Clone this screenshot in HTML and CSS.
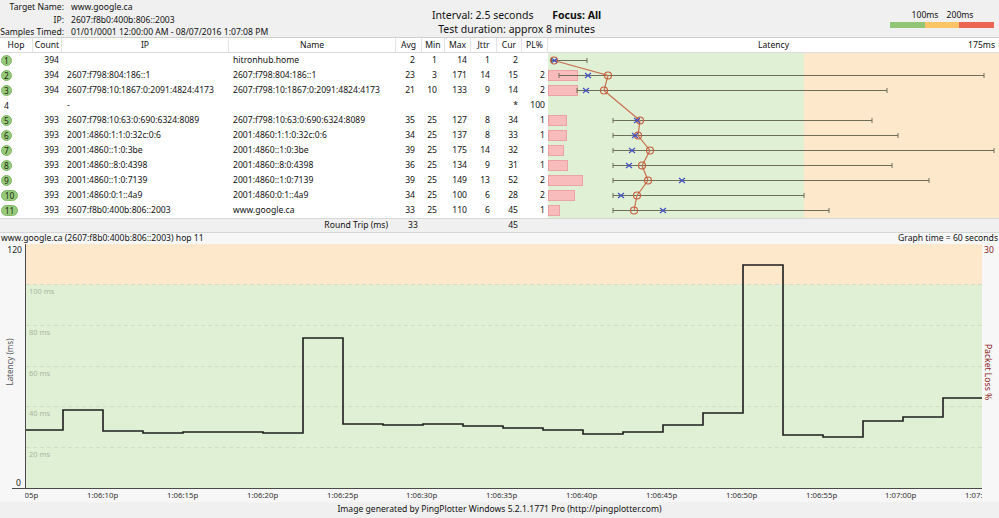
FILE: index.html
```html
<!DOCTYPE html>
<html>
<head>
<meta charset="utf-8">
<link rel="stylesheet" href="styles.css">
</head>
<body>
<header class="top">
  <div class="target">
    <span class="lbl">Target Name:</span><span>www.google.ca</span>
    <span class="lbl">IP:</span><span>2607:f8b0:400b:806::2003</span>
    <span class="lbl">Samples Timed:</span><span>01/01/0001 12:00:00 AM - 08/07/2016 1:07:08 PM</span>
  </div>
  <div class="info">
    <div>Interval: 2.5 seconds <b class="focus">Focus: All</b></div>
    <div>Test duration: approx 8 minutes</div>
  </div>
  <div class="legend">
    <div class="legend-labels"><span></span><span>100ms</span><span>200ms</span><span></span></div>
    <div class="legend-bar"><span class="lg-g"></span><span class="lg-o"></span><span class="lg-r"></span></div>
  </div>
</header>

<section class="trace">
  <div class="row head">
    <div class="c">Hop</div><div class="c">Count</div><div class="c">IP</div><div class="c">Name</div>
    <div class="c">Avg</div><div class="c">Min</div><div class="c">Max</div><div class="c">Jttr</div>
    <div class="c">Cur</div><div class="c">PL%</div>
    <div class="c lat-head"><span></span><span>Latency</span><span class="lat-max">175ms</span></div>
  </div>

  <div class="row"><div class="c hop"><span class="dot">1</span></div><div class="c num cnt">394</div><div class="c ip"></div><div class="c nm">hitronhub.home</div><div class="c num avg">2</div><div class="c num min">1</div><div class="c num max">14</div><div class="c num jt">1</div><div class="c num cur">2</div><div class="c num pl"></div><div class="c lat"></div></div>
  <div class="row"><div class="c hop"><span class="dot">2</span></div><div class="c num cnt">394</div><div class="c ip">2607:f798:804:186::1</div><div class="c nm">2607:f798:804:186::1</div><div class="c num avg">23</div><div class="c num min">3</div><div class="c num max">171</div><div class="c num jt">14</div><div class="c num cur">15</div><div class="c num pl">2</div><div class="c lat"></div></div>
  <div class="row"><div class="c hop"><span class="dot">3</span></div><div class="c num cnt">394</div><div class="c ip">2607:f798:10:1867:0:2091:4824:4173</div><div class="c nm">2607:f798:10:1867:0:2091:4824:4173</div><div class="c num avg">21</div><div class="c num min">10</div><div class="c num max">133</div><div class="c num jt">9</div><div class="c num cur">14</div><div class="c num pl">2</div><div class="c lat"></div></div>
  <div class="row"><div class="c hop"><span class="nodot">4</span></div><div class="c num cnt"></div><div class="c ip">-</div><div class="c nm"></div><div class="c num avg"></div><div class="c num min"></div><div class="c num max"></div><div class="c num jt"></div><div class="c num cur">*</div><div class="c num pl">100</div><div class="c lat"></div></div>
  <div class="row"><div class="c hop"><span class="dot">5</span></div><div class="c num cnt">393</div><div class="c ip">2607:f798:10:63:0:690:6324:8089</div><div class="c nm">2607:f798:10:63:0:690:6324:8089</div><div class="c num avg">35</div><div class="c num min">25</div><div class="c num max">127</div><div class="c num jt">8</div><div class="c num cur">34</div><div class="c num pl">1</div><div class="c lat"></div></div>
  <div class="row"><div class="c hop"><span class="dot">6</span></div><div class="c num cnt">393</div><div class="c ip">2001:4860:1:1:0:32c:0:6</div><div class="c nm">2001:4860:1:1:0:32c:0:6</div><div class="c num avg">34</div><div class="c num min">25</div><div class="c num max">137</div><div class="c num jt">8</div><div class="c num cur">33</div><div class="c num pl">1</div><div class="c lat"></div></div>
  <div class="row"><div class="c hop"><span class="dot">7</span></div><div class="c num cnt">393</div><div class="c ip">2001:4860::1:0:3be</div><div class="c nm">2001:4860::1:0:3be</div><div class="c num avg">39</div><div class="c num min">25</div><div class="c num max">175</div><div class="c num jt">14</div><div class="c num cur">32</div><div class="c num pl">1</div><div class="c lat"></div></div>
  <div class="row"><div class="c hop"><span class="dot">8</span></div><div class="c num cnt">393</div><div class="c ip">2001:4860::8:0:4398</div><div class="c nm">2001:4860::8:0:4398</div><div class="c num avg">36</div><div class="c num min">25</div><div class="c num max">134</div><div class="c num jt">9</div><div class="c num cur">31</div><div class="c num pl">1</div><div class="c lat"></div></div>
  <div class="row"><div class="c hop"><span class="dot">9</span></div><div class="c num cnt">393</div><div class="c ip">2001:4860::1:0:7139</div><div class="c nm">2001:4860::1:0:7139</div><div class="c num avg">39</div><div class="c num min">25</div><div class="c num max">149</div><div class="c num jt">13</div><div class="c num cur">52</div><div class="c num pl">2</div><div class="c lat"></div></div>
  <div class="row"><div class="c hop"><span class="dot wide">10</span></div><div class="c num cnt">393</div><div class="c ip">2001:4860:0:1::4a9</div><div class="c nm">2001:4860:0:1::4a9</div><div class="c num avg">34</div><div class="c num min">25</div><div class="c num max">100</div><div class="c num jt">6</div><div class="c num cur">28</div><div class="c num pl">2</div><div class="c lat"></div></div>
  <div class="row"><div class="c hop"><span class="dot wide">11</span></div><div class="c num cnt">393</div><div class="c ip">2607:f8b0:400b:806::2003</div><div class="c nm">www.google.ca</div><div class="c num avg">33</div><div class="c num min">25</div><div class="c num max">110</div><div class="c num jt">6</div><div class="c num cur">45</div><div class="c num pl">1</div><div class="c lat"></div></div>

  <div class="row rt">
    <div class="c rt-label">Round Trip (ms)</div>
    <div class="c num avg rt-avg">33</div><div class="c"></div><div class="c"></div><div class="c"></div>
    <div class="c num cur">45</div><div class="c"></div><div class="c"></div>
  </div>

  <svg class="latency" width="451" height="165" viewBox="0 0 451 165">
    <g fill="#f8bcbc" stroke="#eba2a2" stroke-width="1">
      <rect x="0.5" y="17.5" width="29" height="10"/>
      <rect x="0.5" y="32.5" width="29" height="10"/>
      <rect x="0.5" y="62.5" width="18" height="10"/>
      <rect x="0.5" y="77.5" width="18" height="10"/>
      <rect x="0.5" y="92.5" width="15" height="10"/>
      <rect x="0.5" y="107.5" width="19" height="10"/>
      <rect x="0.5" y="122.5" width="34" height="10"/>
      <rect x="0.5" y="137.5" width="26" height="10"/>
      <rect x="0.5" y="152.5" width="11" height="10"/>
    </g>
    <g stroke="#6e6e58" stroke-width="1" fill="none">
      <path d="M3.5 7.5H39M3.5 5V10M39 5V10"/>
      <path d="M11 22.5H436M11 20V25M436 20V25"/>
      <path d="M29 37.5H339M29 35V40M339 35V40"/>
      <path d="M65 67.5H324M65 65V70M324 65V70"/>
      <path d="M65 82.5H350M65 80V85M350 80V85"/>
      <path d="M65 97.5H446M65 95V100M446 95V100"/>
      <path d="M65 112.5H344M65 110V115M344 110V115"/>
      <path d="M65 127.5H381M65 125V130M381 125V130"/>
      <path d="M65 142.5H256M65 140V145M256 140V145"/>
      <path d="M65 157.5H281M65 155V160M281 155V160"/>
    </g>
    <polyline points="6,7.5 60,22.5 56,37.5 92,67.5 90,82.5 102,97.5 94,112.5 100,127.5 89,142.5 86,157.5" fill="none" stroke="#c9704d" stroke-width="1.2"/>
    <g fill="none" stroke="#c6593a" stroke-width="1.1">
      <circle cx="6" cy="7.5" r="3.5"/>
      <circle cx="60" cy="22.5" r="3.5"/>
      <circle cx="56" cy="37.5" r="3.5"/>
      <circle cx="92" cy="67.5" r="3.5"/>
      <circle cx="90" cy="82.5" r="3.5"/>
      <circle cx="102" cy="97.5" r="3.5"/>
      <circle cx="94" cy="112.5" r="3.5"/>
      <circle cx="100" cy="127.5" r="3.5"/>
      <circle cx="89" cy="142.5" r="3.5"/>
      <circle cx="86" cy="157.5" r="3.5"/>
    </g>
    <g stroke="#3d4ec6" stroke-width="1.1">
      <path d="M4 5.5l5 4M9 5.5l-5 4"/>
      <path d="M37 20l6 5M43 20l-6 5"/>
      <path d="M35 35l6 5M41 35l-6 5"/>
      <path d="M86 65l6 5M92 65l-6 5"/>
      <path d="M84 80l6 5M90 80l-6 5"/>
      <path d="M81 95l6 5M87 95l-6 5"/>
      <path d="M78 110l6 5M84 110l-6 5"/>
      <path d="M131 125l6 5M137 125l-6 5"/>
      <path d="M70 140l6 5M76 140l-6 5"/>
      <path d="M112 155l6 5M118 155l-6 5"/>
    </g>
  </svg>
</section>

<section class="graph">
  <div class="gtitle"><span>www.google.ca (2607:f8b0:400b:806::2003) hop 11</span><span>Graph time = 60 seconds</span></div>
  <svg class="plot" width="999" height="258" viewBox="0 0 999 258">
    <defs>
      <clipPath id="axisclip"><rect x="25" y="244" width="957" height="14"/></clipPath>
    </defs>
    <rect x="25" y="0" width="957" height="41" fill="#fee8cc"/>
    <rect x="25" y="41" width="957" height="203" fill="#dff0d5"/>
    <g stroke="#d2dccb" stroke-width="1" stroke-dasharray="4 3">
      <path d="M26 40.5H982"/>
      <path d="M26 81.5H982"/>
      <path d="M26 122.5H982"/>
      <path d="M26 162.5H982"/>
      <path d="M26 203.5H982"/>
    </g>
    <g class="gridlbl">
      <text x="29" y="50">100 ms</text>
      <text x="29" y="91">80 ms</text>
      <text x="29" y="132">60 ms</text>
      <text x="29" y="172">40 ms</text>
      <text x="29" y="213">20 ms</text>
    </g>
    <path d="M25 186H63V166H103V187H143V189H183V188H223V188H263V189H303V94H343V180H383V181H423V180H463V182H503V184H543V186H583V190H623V188H663V181H703V169H743V21H783V191H823V193H863V177H903V173H943V154H982" fill="none" stroke="#1c1c1c" stroke-width="1.6"/>
    <path d="M25.5 0V244.5M12 244.5H982" stroke="#4a4a4a" stroke-width="1" fill="none"/>
    <text class="axnum" x="22" y="9" text-anchor="end">120</text>
    <text class="axnum" x="21" y="242" text-anchor="end">0</text>
    <text class="axpl" x="984" y="9">30</text>
    <text class="axtitle" transform="translate(13 118) rotate(-90)" text-anchor="middle">Latency (ms)</text>
    <text class="axpl" transform="translate(985 128) rotate(90)" text-anchor="middle">Packet Loss %</text>
    <g class="tlbl" clip-path="url(#axisclip)">
      <text x="7" y="254">1:06:05p</text>
      <text x="87" y="254">1:06:10p</text>
      <text x="167" y="254">1:06:15p</text>
      <text x="247" y="254">1:06:20p</text>
      <text x="327" y="254">1:06:25p</text>
      <text x="406" y="254">1:06:30p</text>
      <text x="486" y="254">1:06:35p</text>
      <text x="566" y="254">1:06:40p</text>
      <text x="646" y="254">1:06:45p</text>
      <text x="726" y="254">1:06:50p</text>
      <text x="806" y="254">1:06:55p</text>
      <text x="885" y="254">1:07:00p</text>
      <text x="965" y="254">1:07:05p</text>
    </g>
  </svg>
</section>

<footer class="foot">Image generated by PingPlotter Windows 5.2.1.1771 Pro (http://pingplotter.com)</footer>
</body>
</html>
```

FILE: styles.css
```css
* { box-sizing: border-box; }
html, body { margin: 0; padding: 0; }
body {
  width: 999px;
  height: 518px;
  overflow: hidden;
  background: #f0f0f0;
  font-family: "Noto Sans", "Open Sans", sans-serif;
  color: #111;
}

/* ---------- header ---------- */
.top {
  height: 38px;
  display: flex;
  border-bottom: 1px solid #cfcfcf;
}
.target {
  flex: 0 0 432px;
  display: grid;
  grid-template-columns: 64px auto;
  column-gap: 7px;
  align-content: start;
  font-size: 8.6px;
  line-height: 12.5px;
  padding-top: 1px;
  white-space: nowrap;
}
.target .lbl { text-align: right; }
.info {
  flex: 0 0 auto;
  text-align: center;
  font-size: 10.5px;
  line-height: 14px;
  padding-top: 8px;
  white-space: nowrap;
}
.focus { margin-left: 16px; font-weight: bold; }
.legend {
  margin-left: auto;
  width: 104px;
  margin-right: 5px;
  padding-top: 9px;
}
.legend-labels {
  display: grid;
  grid-template-columns: 17.5px 35px 35px 16.5px;
  font-size: 8.6px;
  line-height: 12px;
  text-align: center;
  white-space: nowrap;
}
.legend-labels span { display: flex; justify-content: center; }
.legend-bar { display: flex; height: 6px; margin-top: 1px; }
.legend-bar span { flex: 1; }
.lg-g { background: #90c675; }
.lg-o { background: #fbc565; }
.lg-r { background: #ee6452; }

/* ---------- trace table ---------- */
.trace {
  position: relative;
  background: #fff;
}
.row {
  display: grid;
  grid-template-columns: 33px 29px 167px 167px 26px 23px 26px 26px 25px 26px 1fr;
  height: 15px;
  align-items: center;
  font-size: 8.6px;
  line-height: 15px;
}
.c { white-space: nowrap; overflow: hidden; height: 15px; }
.head { border-bottom: 1px solid #dcdcdc; }
.head .c { text-align: center; border-right: 1px solid #e4e4e4; height: 14px; line-height: 14px; }
.head .c:last-child { border-right: none; }
.lat-head { display: grid; grid-template-columns: 1fr auto 1fr; }
.lat-max { text-align: right; padding-right: 4px; }

.num { text-align: right; }
.cnt { padding-right: 3px; }
.ip { padding-left: 5px; }
.nm { padding-left: 4px; }
.avg { padding-right: 7px; }
.min { padding-right: 8px; }
.max { padding-right: 4px; }
.jt { padding-right: 7px; }
.cur { padding-right: 4px; }
.pl { padding-right: 3px; }

.hop { display: flex; align-items: center; padding-left: 1px; }
.dot {
  display: inline-block;
  min-width: 11px;
  height: 11px;
  padding: 0 1px;
  border-radius: 6px;
  background: #97ca7b;
  border: 1px solid #80b865;
  text-align: center;
  font-size: 8.4px;
  line-height: 9px;
  color: #1d2a14;
}
.dot.wide { min-width: 17px; padding: 0 2px; }
.nodot { display: inline-block; width: 11px; text-align: center; font-size: 8.6px; line-height: 10px; }

.lat {
  height: 15px;
  background: linear-gradient(to right, #dff0d5 256px, #fee8cc 256px);
}

.rt {
  background: #f0f0f0;
  border-top: 1px solid #d6d6d6;
  border-bottom: 1px solid #d6d6d6;
  grid-template-columns: 396px 26px 23px 26px 26px 25px 26px 1fr;
}
.rt .c { height: 13px; line-height: 13px; }
.rt-label { text-align: right; padding-right: 8px; }
.rt-avg { text-align: left; padding-left: 12px; }

.latency {
  position: absolute;
  left: 548px;
  top: 15px;
  display: block;
}

/* ---------- graph ---------- */
.graph { background: #f7f7f7; }
.gtitle {
  display: flex;
  justify-content: space-between;
  height: 11px;
  font-size: 8.6px;
  line-height: 11px;
  padding: 0 1px 0 1px;
  white-space: nowrap;
}
.plot { display: block; }
.plot text { font-family: "Noto Sans", "Open Sans", sans-serif; }
.gridlbl { font-size: 7.5px; fill: #a9b6a2; }
.axnum { font-size: 8.6px; fill: #222; }
.axpl { font-size: 8.6px; fill: #8e2424; }
.axtitle { font-size: 8px; fill: #555; }
.tlbl { font-size: 7.8px; fill: #333; }

.foot {
  height: 16px;
  background: #f0f0f0;
  text-align: center;
  font-size: 8.6px;
  line-height: 14px;
  white-space: nowrap;
}
```
